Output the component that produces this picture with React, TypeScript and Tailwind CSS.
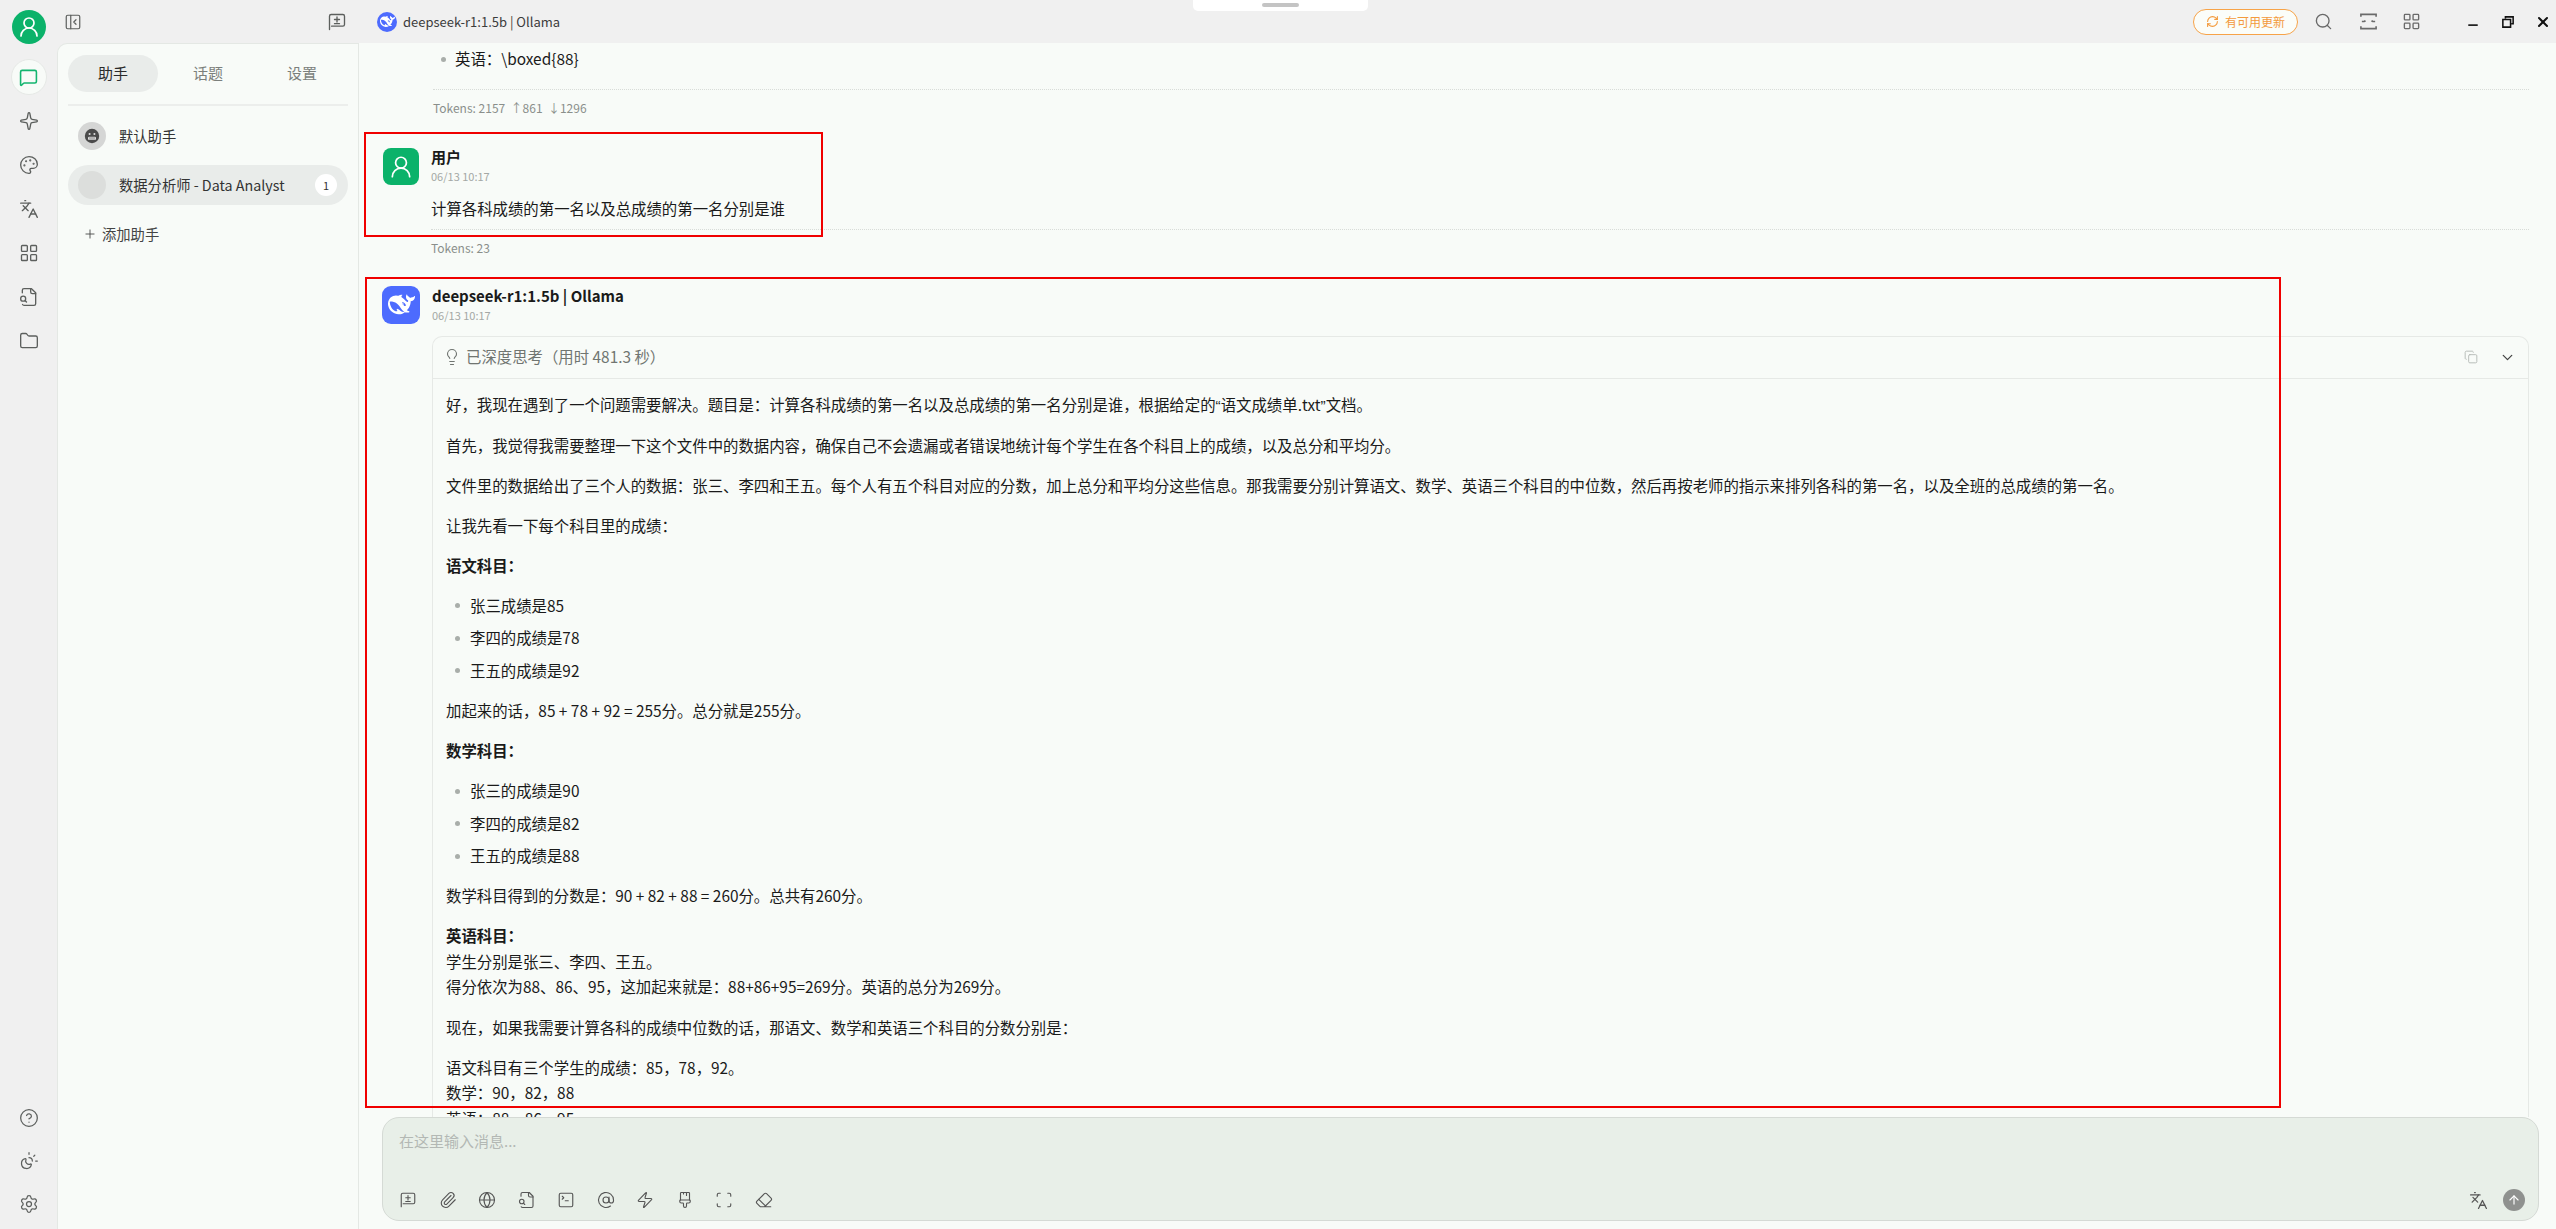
import React from 'react';
import {
  ArrowUp,
  AtSign,
  ChevronDown,
  CircleHelp,
  Copy,
  Eraser,
  Folder,
  Globe,
  Languages,
  LayoutGrid,
  Lightbulb,
  MessageSquare,
  Minus,
  PaintbrushVertical,
  Palette,
  PanelLeftClose,
  Paperclip,
  Plus,
  RefreshCw,
  Scan,
  Search,
  Settings,
  Sparkle,
  SquareTerminal,
  SunMoon,
  UserRound,
  X,
  Zap,
} from 'lucide-react';

type IconProps = { size?: number; strokeWidth?: number; className?: string };

const Whale: React.FC<{ className?: string }> = ({ className }) => (
  <svg viewBox="0 0 24 24" className={className} fill="currentColor">
    <path d="M23.748 4.482c-.254-.124-.364.113-.512.234-.051.039-.094.09-.137.136-.372.397-.806.657-1.373.626-.829-.046-1.537.214-2.163.848-.133-.782-.575-1.248-1.247-1.548-.352-.156-.708-.311-.955-.65-.172-.241-.219-.51-.305-.774-.055-.16-.11-.323-.293-.35-.2-.031-.278.136-.356.276-.313.572-.434 1.202-.422 1.84.027 1.436.633 2.58 1.838 3.393.137.093.172.187.129.323-.082.28-.18.552-.266.833-.055.179-.137.217-.329.14a5.526 5.526 0 01-1.736-1.18c-.857-.828-1.631-1.742-2.597-2.458a11.365 11.365 0 00-.689-.471c-.985-.957.13-1.743.388-1.836.27-.098.093-.432-.779-.428-.872.004-1.67.295-2.687.684a3.055 3.055 0 01-.465.137 9.597 9.597 0 00-2.883-.102c-1.885.21-3.39 1.102-4.497 2.623C.082 8.606-.231 10.684.152 12.85c.403 2.284 1.569 4.175 3.36 5.653 1.858 1.533 3.997 2.284 6.438 2.14 1.482-.085 3.133-.284 4.994-1.86.47.234.962.327 1.78.397.63.059 1.236-.03 1.705-.128.735-.156.684-.837.419-.961-2.155-1.004-1.682-.595-2.113-.926 1.096-1.296 2.746-2.642 3.392-7.003.05-.347.007-.565 0-.845-.004-.17.035-.237.23-.256a4.173 4.173 0 001.545-.475c1.396-.763 1.96-2.015 2.093-3.517.02-.23-.004-.467-.247-.588zM11.581 18c-2.089-1.642-3.102-2.183-3.52-2.16-.392.024-.321.471-.235.763.09.288.207.486.371.739.114.167.192.416-.113.603-.673.416-1.842-.14-1.897-.167-1.361-.802-2.5-1.86-3.301-3.307-.774-1.393-1.224-2.887-1.298-4.482-.02-.386.093-.522.477-.592a4.696 4.696 0 011.529-.039c2.132.312 3.946 1.265 5.468 2.774.868.86 1.525 1.887 2.202 2.891.72 1.066 1.494 2.082 2.48 2.914.348.292.625.514.891.677-.802.09-2.14.11-3.054-.614zm1-6.44a.306.306 0 01.415-.287.302.302 0 01.2.288.306.306 0 01-.31.307.303.303 0 01-.304-.308zm3.11 1.596c-.2.081-.399.151-.59.16a1.245 1.245 0 01-.798-.254c-.274-.23-.47-.358-.552-.758a1.73 1.73 0 01.016-.588c.07-.327-.008-.537-.239-.727-.187-.156-.426-.199-.688-.199a.559.559 0 01-.254-.078c-.11-.054-.2-.19-.114-.358.028-.054.16-.186.192-.21.356-.202.767-.136 1.146.016.352.144.618.408 1.001.782.391.451.462.576.685.914.176.265.336.537.445.848.067.195-.019.354-.25.452z" />
  </svg>
);

const NewTopic: React.FC<IconProps> = ({ size = 18, strokeWidth = 1.6, className }) => (
  <svg viewBox="0 0 24 24" width={size} height={size} className={className} fill="none" stroke="currentColor" strokeWidth={strokeWidth} strokeLinecap="round" strokeLinejoin="round">
    <path d="M3 21V5a2 2 0 0 1 2-2h14a2 2 0 0 1 2 2v10a2 2 0 0 1-2 2H5.5" />
    <path d="M12 6v6M9 9h6M9 14h6" />
  </svg>
);

// document with a small lens sticking out of its lower left corner
const FileLens: React.FC<IconProps> = ({ size = 18, strokeWidth = 1.6, className }) => (
  <svg viewBox="0 0 24 24" width={size} height={size} className={className} fill="none" stroke="currentColor" strokeWidth={strokeWidth} strokeLinecap="round" strokeLinejoin="round">
    <path d="M14 2v4a2 2 0 0 0 2 2h4" />
    <path d="M4.268 21a2 2 0 0 0 1.727 1H18a2 2 0 0 0 2-2V7l-5-5H6a2 2 0 0 0-2 2v3" />
    <path d="m9 18-1.5-1.5" />
    <circle cx="5" cy="14" r="3" />
  </svg>
);

const GrinFace: React.FC = () => (
  <svg viewBox="0 0 20 20" className="w-[16px] h-[16px]">
    <circle cx="10" cy="10" r="9" fill="#4a4a4a" />
    <circle cx="7" cy="7.5" r="1.3" fill="#dedede" />
    <circle cx="13" cy="7.5" r="1.3" fill="#dedede" />
    <rect x="5" y="11" width="10" height="4" rx="1.5" fill="#dedede" />
    <path d="M7.5 11v4M10 11v4M12.5 11v4" stroke="#4a4a4a" strokeWidth={0.7} />
  </svg>
);

const sideTop = [Sparkle, Palette, Languages, LayoutGrid, FileLens, Folder];
const sideBottom = [CircleHelp, SunMoon, Settings];
const toolbar = [NewTopic, Paperclip, Globe, FileLens, SquareTerminal, AtSign, Zap, PaintbrushVertical, Scan, Eraser];

const Para: React.FC<{ children: React.ReactNode }> = ({ children }) => <p className="mb-[14.6px]">{children}</p>;

const Bullets: React.FC<{ items: string[] }> = ({ items }) => (
  <ul className="mb-[14.6px] flex flex-col gap-[7px]">
    {items.map((item) => (
      <li key={item} className="flex items-center pl-[9px]">
        <span className="w-[5px] h-[5px] rounded-full bg-[#a9aeaa] mr-[10px]" />
        {item}
      </li>
    ))}
  </ul>
);

const App: React.FC = () => {
  return (
    <div className="relative w-[2556px] h-[1229px] overflow-hidden flex bg-[#f0f0f0] text-[#1a1a1a] text-[15.4px] font-['Noto_Sans_CJK_SC','Noto_Sans',sans-serif]">
      {/* icon rail */}
      <aside className="w-[57px] shrink-0 flex flex-col items-center pt-[10px] pb-[15px] text-[#5c5f5d]">
        <div className="w-[34px] h-[34px] rounded-full bg-[#0bb26a] flex items-center justify-center text-white">
          <UserRound size={24} strokeWidth={1.7} />
        </div>
        <div className="mt-[15px] w-[36px] h-[36px] rounded-full bg-[#f8fbf8] border border-[#e6e9e6] flex items-center justify-center text-[#13b56f]">
          <MessageSquare size={19} strokeWidth={2} />
        </div>
        <div className="mt-[16px] flex flex-col gap-[24px]">
          {sideTop.map((Icon, i) => (
            <Icon key={i} size={20} strokeWidth={1.6} />
          ))}
        </div>
        <div className="mt-auto flex flex-col gap-[23px]">
          {sideBottom.map((Icon, i) => (
            <Icon key={i} size={20} strokeWidth={1.5} />
          ))}
        </div>
      </aside>

      <div className="flex-1 min-w-0 flex flex-col">
        {/* top bar */}
        <header className="h-[43px] shrink-0 flex items-center relative">
          <div className="w-[302px] shrink-0 flex items-center justify-between pl-[7px] pr-[12px] text-[#5c5f5d]">
            <PanelLeftClose size={18} strokeWidth={1.6} />
            <NewTopic size={20} strokeWidth={1.6} />
          </div>
          <div className="ml-[18px] w-[20px] h-[20px] rounded-full bg-[#4d6bfe] flex items-center justify-center text-white">
            <Whale className="w-[15px] h-[15px]" />
          </div>
          <span className="ml-[6px] text-[13px] text-[#3c3c3c]">deepseek-r1:1.5b | Ollama</span>
          <div className="ml-auto flex items-center text-[#6a6a6a]">
            <div className="h-[26px] w-[105px] rounded-full border border-[#f7a348] bg-[#fbfdf9] text-[#f39a3c] text-[12px] flex items-center justify-center gap-[6px]">
              <RefreshCw size={13} strokeWidth={2} />
              有可用更新
            </div>
            <Search size={19} strokeWidth={1.7} className="ml-[16px]" />
            <svg viewBox="0 0 20 20" className="ml-[26px] w-[19px] h-[19px]" fill="none" stroke="currentColor" strokeWidth={1.7}>
              <path d="M2 5V2.5h16V5M2 15v2.5h16V15" />
              <path d="M3 10h3M14 10h3M7 10l-1.5-1M13 10l1.5-1" strokeWidth={1.4} />
            </svg>
            <LayoutGrid size={19} strokeWidth={1.7} className="ml-[24px]" />
            <Minus size={14} strokeWidth={3} className="ml-[45px] text-[#222] translate-y-[3px]" />
            <svg viewBox="0 0 14 14" className="ml-[22px] w-[12px] h-[12px] text-[#111]" fill="none" stroke="currentColor" strokeWidth={1.8}>
              <path d="M4 3V1h9v8h-2M1 4h9v9H1z" />
            </svg>
            <X size={16} strokeWidth={3} className="ml-[21px] mr-[5px] text-[#111]" />
          </div>
          <div className="absolute left-[1136px] top-0 w-[175px] h-[11px] bg-white rounded-b-[5px] flex justify-center pt-[3px]">
            <span className="w-[37px] h-[4px] rounded-full bg-[#c4c4c4]" />
          </div>
        </header>

        <div className="flex-1 min-h-0 flex">
          {/* assistants */}
          <section className="w-[302px] shrink-0 bg-[#f8fbf8] rounded-tl-[10px] border-t border-l border-r border-[#e4e8e4] px-[10px] text-[14.3px]">
            <div className="mt-[11px] flex items-center text-center text-[#7b7f7c] text-[15px] pb-[12px] border-b-2 border-[#eceeec]">
              <div className="w-[90px] h-[37px] rounded-full bg-[#e9ecea] text-[#2a2a2a] flex items-center justify-center">助手</div>
              <div className="w-[100px]">话题</div>
              <div className="w-[88px]">设置</div>
            </div>
            <div className="mt-[10px] h-[40px] flex items-center pl-[10px] text-[#333]">
              <div className="w-[28px] h-[28px] rounded-full bg-[#d5d6d5] flex items-center justify-center mr-[13px]">
                <GrinFace />
              </div>
              默认助手
            </div>
            <div className="mt-[9px] h-[40px] flex items-center pl-[10px] pr-[11px] rounded-full bg-[#e9ecea] text-[#333]">
              <div className="w-[28px] h-[28px] rounded-full bg-[#dcdedc] mr-[13px]" />
              数据分析师 - Data Analyst
              <span className="ml-auto w-[22px] h-[22px] rounded-full bg-white flex items-center justify-center text-[11px]">1</span>
            </div>
            <div className="mt-[9px] h-[40px] flex items-center pl-[15px] text-[#444]">
              <Plus size={14} strokeWidth={1.5} className="mr-[5px]" />
              添加助手
            </div>
          </section>

          {/* chat */}
          <main className="flex-1 min-w-0 flex flex-col bg-[#f8fbf8] pr-[17px]">
            <div className="flex-1 min-h-0 overflow-hidden pl-[16px] pr-[10px] leading-[25.5px]">
              <div className="h-[32px] flex items-center pl-[66px]">
                <span className="w-[5px] h-[5px] rounded-full bg-[#a9aeaa] mr-[9px]" />
                英语：\boxed{'{88}'}
              </div>
              <div className="ml-[58px] mt-[14px] border-t border-dotted border-[#d8dcd8]" />
              <div className="ml-[58px] mt-[8px] text-[12px] leading-[20px] text-[#8a8f8b]">Tokens: 2157 &nbsp;↑861 &nbsp;↓1296</div>

              <div className="mt-[30px] flex">
                <div className="ml-[8px] w-[36px] h-[37px] rounded-[8px] bg-[#0bb26a] flex items-center justify-center text-white">
                  <UserRound size={26} strokeWidth={1.6} />
                </div>
                <div className="ml-[12px] flex-1 min-w-0 leading-none">
                  <div className="text-[15px] font-bold mt-[1px]">用户</div>
                  <div className="text-[11px] text-[#a4a8a5] mt-[7px]">06/13 10:17</div>
                  <div className="mt-[14px] leading-[25.5px]">计算各科成绩的第一名以及总成绩的第一名分别是谁</div>
                  <div className="mt-[7px] border-t border-dotted border-[#d8dcd8]" />
                  <div className="mt-[8px] text-[12px] leading-[20px] text-[#8a8f8b]">Tokens: 23</div>
                </div>
              </div>

              <div className="mt-[28px] flex">
                <div className="ml-[7px] w-[38px] h-[38px] rounded-[9px] bg-[#4d6bfe] flex items-center justify-center text-white">
                  <Whale className="w-[27px] h-[27px]" />
                </div>
                <div className="ml-[12px] flex-1 min-w-0 leading-none">
                  <div className="text-[15px] font-bold mt-[2px]">deepseek-r1:1.5b | Ollama</div>
                  <div className="text-[11px] text-[#a4a8a5] mt-[7px]">06/13 10:17</div>
                  <div className="mt-[15px] rounded-t-[10px] border border-b-0 border-[#e6e9e6]">
                    <div className="h-[42px] flex items-center border-b border-[#e6e9e6] pl-[10px] pr-[12px] text-[#707571] text-[15.4px]">
                      <Lightbulb size={18} strokeWidth={1.5} className="mr-[5px]" />
                      已深度思考（用时 481.3 秒）
                      <Copy size={14} strokeWidth={1.6} className="ml-auto text-[#b5b9b6]" />
                      <ChevronDown size={17} strokeWidth={1.8} className="ml-[21px] text-[#444]" />
                    </div>
                    <div className="pt-[13px] pl-[13px] leading-[25.5px]">
                      <Para>
                        好，我现在遇到了一个问题需要解决。题目是：计算各科成绩的第一名以及总成绩的第一名分别是谁，根据给定的
                        <span className="font-['Liberation_Sans']">“</span>语文成绩单.txt<span className="font-['Liberation_Sans']">”</span>
                        文档。
                      </Para>
                      <Para>首先，我觉得我需要整理一下这个文件中的数据内容，确保自己不会遗漏或者错误地统计每个学生在各个科目上的成绩，以及总分和平均分。</Para>
                      <Para>文件里的数据给出了三个人的数据：张三、李四和王五。每个人有五个科目对应的分数，加上总分和平均分这些信息。那我需要分别计算语文、数学、英语三个科目的中位数，然后再按老师的指示来排列各科的第一名，以及全班的总成绩的第一名。</Para>
                      <Para>让我先看一下每个科目里的成绩：</Para>
                      <Para><b>语文科目：</b></Para>
                      <Bullets items={['张三成绩是85', '李四的成绩是78', '王五的成绩是92']} />
                      <Para>加起来的话，85 + 78 + 92 = 255分。总分就是255分。</Para>
                      <Para><b>数学科目：</b></Para>
                      <Bullets items={['张三的成绩是90', '李四的成绩是82', '王五的成绩是88']} />
                      <Para>数学科目得到的分数是：90 + 82 + 88 = 260分。总共有260分。</Para>
                      <Para>
                        <b>英语科目：</b>
                        <br />
                        学生分别是张三、李四、王五。
                        <br />
                        得分依次为88、86、95，这加起来就是：88+86+95=269分。英语的总分为269分。
                      </Para>
                      <Para>现在，如果我需要计算各科的成绩中位数的话，那语文、数学和英语三个科目的分数分别是：</Para>
                      <p>
                        语文科目有三个学生的成绩：85，78，92。
                        <br />
                        数学：90，82，88
                        <br />
                        英语：88，86，95
                      </p>
                    </div>
                  </div>
                </div>
              </div>
            </div>

            {/* input */}
            <div className="ml-[23px] mb-[8px] h-[104px] shrink-0 rounded-[17px] border border-[#d5dad5] bg-[#e8efe8] flex flex-col px-[16px] pt-[10px] pb-[9px]">
              <div className="text-[#b3b8b4] text-[15px] leading-[25px]">在这里输入消息...</div>
              <div className="mt-auto flex items-center text-[#555]">
                <div className="flex gap-[21.5px]">
                  {toolbar.map((Icon, i) => (
                    <Icon key={i} size={18} strokeWidth={1.5} />
                  ))}
                </div>
                <Languages size={19} strokeWidth={1.6} className="ml-auto" />
                <div className="ml-[15px] mr-[-3px] w-[22px] h-[22px] rounded-full bg-[#8f918f] flex items-center justify-center text-white">
                  <ArrowUp size={14} strokeWidth={2} />
                </div>
              </div>
            </div>
          </main>
        </div>
      </div>

      {/* red annotation boxes drawn over the screenshot */}
      <div className="absolute left-[364px] top-[132px] w-[459px] h-[105px] border-2 border-[#f00000] pointer-events-none" />
      <div className="absolute left-[365px] top-[277px] w-[1916px] h-[831px] border-2 border-[#f00000] pointer-events-none" />
    </div>
  );
};

export default App;
